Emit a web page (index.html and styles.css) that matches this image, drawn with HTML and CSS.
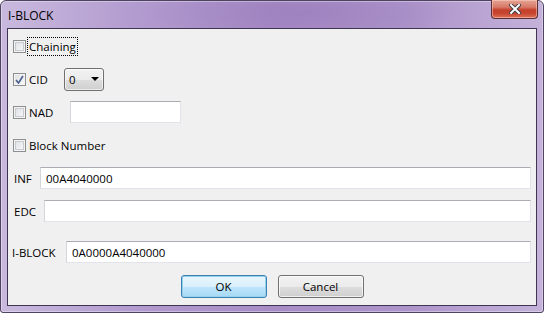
FILE: index.html
```html
<!DOCTYPE html>
<html lang="en">
<head>
  <meta charset="UTF-8">
  <title>I-BLOCK</title>
  <link rel="stylesheet" href="styles.css">
</head>
<body>
  <div class="window">
    <div class="titlebar">
      <span class="title">I-BLOCK</span>
      <button class="close" type="button" aria-label="Close">
        <svg width="12" height="10" viewBox="0 0 12 10">
          <path d="M2 1 L10 9 M10 1 L2 9" stroke="#3a3a44" stroke-width="4" stroke-linecap="square"/>
          <path d="M2 1 L10 9 M10 1 L2 9" stroke="#ffffff" stroke-width="2" stroke-linecap="square"/>
        </svg>
      </button>
    </div>

    <div class="client">
      <div class="row">
        <label class="check w-auto">
          <span class="box"></span>
          <span class="focus">Chaining</span>
        </label>
      </div>

      <div class="row">
        <label class="check w-cid">
          <span class="box checked">
            <svg width="9" height="9" viewBox="0 0 9 9"><path d="M1 5 L3.5 8 L8 1" fill="none" stroke="#4a5f8f" stroke-width="1.6"/></svg>
          </span>
          <span>CID</span>
        </label>
        <div class="combo">
          <span>0</span>
          <span class="arrow"></span>
        </div>
      </div>

      <div class="row">
        <label class="check w-nad">
          <span class="box"></span>
          <span>NAD</span>
        </label>
        <input class="field short" type="text">
      </div>

      <div class="row">
        <label class="check w-auto">
          <span class="box"></span>
          <span>Block Number</span>
        </label>
      </div>

      <div class="row">
        <span class="label w-inf">INF</span>
        <input class="field" type="text" value="00A4040000">
      </div>

      <div class="row">
        <span class="label w-edc">EDC</span>
        <input class="field" type="text">
      </div>

      <div class="row spaced">
        <span class="label w-iblock">I-BLOCK</span>
        <input class="field" type="text" value="0A0000A4040000">
      </div>

      <div class="buttons">
        <button class="btn default" type="button">OK</button>
        <button class="btn" type="button">Cancel</button>
      </div>
    </div>
  </div>
</body>
</html>
```

FILE: styles.css
```css
/* Window frame */
body {
  margin: 0;
  background: #ffffff;
  font-family: 'Open Sans', 'Noto Sans', sans-serif;
  font-size: 11.5px;
  color: #000;
}

.window {
  width: 544px;
  height: 313px;
  box-sizing: border-box;
  border: 1px solid #4e4360;
  border-radius: 6px 6px 3px 3px;
  background:
    radial-gradient(ellipse 160px 30px at 300px 12px, rgba(150, 120, 185, 0.55), transparent),
    linear-gradient(90deg, #c9b9de 0%, #b29bcf 25%, #a78cc6 50%, #ad94ca 75%, #c4b2da 100%);
  box-shadow: inset 0 0 0 1px rgba(255, 255, 255, 0.35);
  display: flex;
  flex-direction: column;
}

.titlebar {
  height: 27px;
  display: flex;
  align-items: flex-start;
  justify-content: space-between;
  padding: 0 5px 0 7px;
}

.title {
  line-height: 29px;
  font-size: 12px;
  color: #000;
}

.close {
  width: 47px;
  height: 19px;
  margin-top: -1px;
  padding: 0;
  border: 1px solid #5a2f34;
  border-top: none;
  border-radius: 0 0 4px 4px;
  background: linear-gradient(#e5a595 0%, #d67866 40%, #c5412c 55%, #c8452f 75%, #dc7357 100%);
  box-shadow: inset 0 0 0 1px rgba(255, 210, 200, 0.5);
  display: flex;
  align-items: center;
  justify-content: center;
}

/* Client area */
.client {
  flex: 1;
  margin: 0 6px 6px;
  border: 1px solid #3f3550;
  background: #f0f0f0;
  padding: 6px 5px 0 5px;
  display: flex;
  flex-direction: column;
  gap: 11px;
}

.row {
  height: 22px;
  display: flex;
  align-items: center;
}

.row.spaced {
  margin-top: 8px;
}

/* Checkboxes */
.check {
  display: flex;
  align-items: center;
  gap: 3px;
  white-space: nowrap;
}

.w-cid { width: 51px; }
.w-nad { width: 57px; }

.box {
  width: 11px;
  height: 11px;
  border: 1px solid #8e8f8f;
  background: linear-gradient(135deg, #dcdee3, #fafafa);
  box-shadow: inset 0 0 0 1px #f4f4f4, inset 0 0 0 2px #c6cad1;
  display: flex;
  align-items: center;
  justify-content: center;
}

.box.checked {
  box-shadow: inset 0 0 0 1px #f4f4f4;
}

.focus {
  outline: 1px dotted #000;
  outline-offset: 1px;
}

/* Labels and fields */
.label {
  padding-left: 1px;
}

.w-inf { width: 26px; }
.w-edc { width: 30px; }
.w-iblock { width: 52px; padding-left: 0; margin-left: -1px; width: 54px; }

.field {
  flex: 1;
  height: 22px;
  box-sizing: border-box;
  border: 1px solid #e2e3ea;
  border-top-color: #abadb3;
  border-left-color: #d4d6dc;
  background: #fff;
  font-family: inherit;
  font-size: 11.5px;
  padding: 0 5px;
  outline: none;
}

.field.short {
  flex: none;
  width: 111px;
}

/* Combo box */
.combo {
  width: 40px;
  height: 23px;
  box-sizing: border-box;
  border: 1px solid #707070;
  border-radius: 3px;
  background: linear-gradient(#f2f2f2 0%, #ebebeb 50%, #dddddd 51%, #cfcfcf 100%);
  box-shadow: inset 0 0 0 1px rgba(255, 255, 255, 0.6);
  display: flex;
  align-items: center;
  justify-content: space-between;
  padding: 0 4px 0 4px;
}

.arrow {
  width: 0;
  height: 0;
  border-left: 4px solid transparent;
  border-right: 4px solid transparent;
  border-top: 4px solid #000;
}

/* Buttons */
.buttons {
  margin-top: 1px;
  display: flex;
  justify-content: center;
  gap: 11px;
}

.btn {
  width: 86px;
  height: 23px;
  border: 1px solid #707070;
  border-radius: 3px;
  background: linear-gradient(#f2f2f2 0%, #ebebeb 50%, #dddddd 51%, #cfcfcf 100%);
  box-shadow: inset 0 0 0 1px rgba(255, 255, 255, 0.7);
  font-family: inherit;
  font-size: 11.5px;
  color: #000;
  padding: 0;
}

.btn.default {
  border-color: #3c7fb1;
  background: linear-gradient(#eaf6fd 0%, #d9f0fc 50%, #bee6fd 51%, #a7d9f5 100%);
  box-shadow: inset 0 0 0 1px #98d1ef;
}
```
